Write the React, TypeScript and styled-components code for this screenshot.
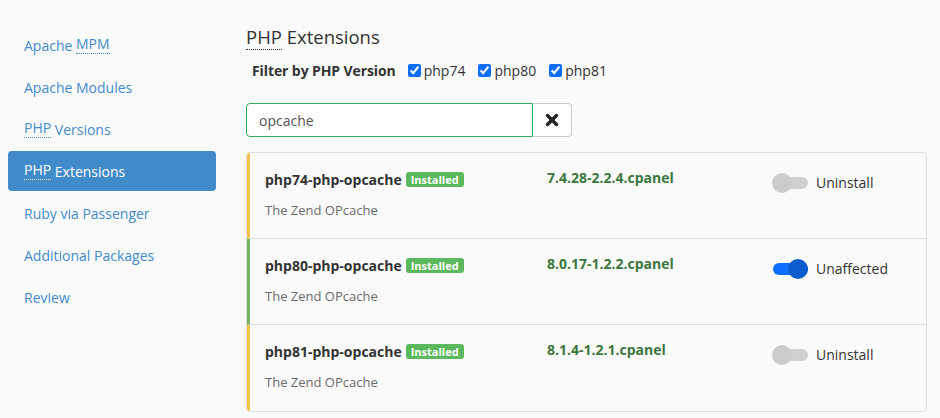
import React from "react";
import styled, { createGlobalStyle } from "styled-components";

const Global = createGlobalStyle`
  html, body { margin: 0; padding: 0; background: #fafafa; }
  body { font-family: "Open Sans", "Liberation Sans", sans-serif; color: #333; font-size: 14px; }
  * { box-sizing: border-box; }
`;

const Page = styled.div`
  display: flex;
  width: 940px;
  height: 418px;
  overflow: hidden;
  background: #fafafa;
`;

const Sidebar = styled.nav`
  width: 216px;
  flex: none;
  padding: 25px 0 0 8px;
  display: flex;
  flex-direction: column;
  gap: 2px;
`;

const NavItem = styled.div<{ $active?: boolean }>`
  height: 40px;
  display: flex;
  align-items: center;
  padding-left: 16px;
  border-radius: 4px;
  font-size: 14px;
  color: ${(p) => (p.$active ? "#fff" : "#428bca")};
  background: ${(p) => (p.$active ? "#428bca" : "transparent")};
`;

const Abbr = styled.abbr`
  text-decoration: none;
  border-bottom: 1px dotted currentColor;
  line-height: 1.15;
`;

const Main = styled.main`
  margin-left: 30px;
  width: 681px;
  display: flex;
  flex-direction: column;
  padding-top: 25px;
`;

const Title = styled.h1`
  margin: 0;
  font-size: 18.5px;
  font-weight: 400;
  line-height: 24px;
  color: #333;
`;

const FilterRow = styled.div`
  display: flex;
  align-items: center;
  margin-top: 10px;
  padding-left: 6px;
  height: 22px;
`;

const FilterLabel = styled.span`
  font-weight: 700;
  font-size: 14px;
  margin-right: 12px;
  letter-spacing: -0.1px;
`;

const Check = styled.label`
  display: flex;
  align-items: center;
  font-size: 14px;
  color: #333;
  margin-right: 13px;
  input {
    margin: 0 3px 0 0;
    width: 13px;
    height: 13px;
    accent-color: #0d6efd;
  }
`;

const SearchGroup = styled.div`
  display: flex;
  margin-top: 22px;
  height: 34px;
  width: 326px;
`;

const SearchInput = styled.input`
  width: 287px;
  height: 34px;
  border: 1px solid #2eaa5c;
  border-radius: 4px 0 0 4px;
  padding: 0 12px;
  font-family: inherit;
  font-size: 14px;
  color: #555;
  background: #fff;
  outline: none;
`;

const ClearButton = styled.button`
  width: 39px;
  height: 34px;
  border: 1px solid #ccc;
  border-left: none;
  border-radius: 0 4px 4px 0;
  background: #fff;
  display: flex;
  align-items: center;
  justify-content: center;
  padding: 0;
`;

const Panel = styled.div`
  margin-top: 15px;
  border: 1px solid #ddd;
  border-radius: 4px;
  overflow: hidden;
  background: #fafafa;
`;

const Row = styled.div<{ $accent: string }>`
  display: grid;
  grid-template-columns: 282px 225px 1fr;
  border-left: 3px solid ${(p) => p.$accent};
  border-bottom: 1px solid #ddd;
  height: 86px;
  padding: 16px 15px 0 15px;
  &:last-child { border-bottom: none; height: 86px; }
`;

const NameCol = styled.div`
  display: flex;
  flex-direction: column;
`;

const NameLine = styled.div`
  display: flex;
  align-items: center;
  height: 20px;
`;

const Name = styled.span`
  font-weight: 700;
  font-size: 14px;
  color: #333;
`;

const Badge = styled.span`
  margin-left: 4px;
  background: #5cb85c;
  color: #fff;
  font-size: 11px;
  font-weight: 700;
  line-height: 15px;
  height: 15px;
  padding: 0 5px;
  border-radius: 3px;
`;

const Desc = styled.div`
  margin-top: 11px;
  font-size: 13px;
  line-height: 20px;
  color: #6a6a6a;
`;

const Version = styled.div`
  font-weight: 700;
  font-size: 14px;
  color: #3c763d;
  line-height: 20px;
  margin-top: -1px;
`;

const ActionCol = styled.div`
  display: flex;
  align-items: flex-start;
  padding-top: 4px;
`;

const Toggle = styled.span<{ $on?: boolean }>`
  position: relative;
  width: 36px;
  height: 20px;
  flex: none;
  &::before {
    content: "";
    position: absolute;
    left: 1px;
    right: 0;
    top: 4px;
    height: 12px;
    border-radius: 6px;
    background: ${(p) => (p.$on ? "#0d6efd" : "#d0d0d0")};
  }
  &::after {
    content: "";
    position: absolute;
    top: 0;
    ${(p) => (p.$on ? "right: 0;" : "left: 0;")}
    width: 20px;
    height: 20px;
    border-radius: 50%;
    background: ${(p) => (p.$on ? "#0a5ccc" : "#cbcbcb")};
  }
`;

const ActionLabel = styled.span`
  margin-left: 8px;
  font-size: 14px;
  line-height: 20px;
  color: #333;
`;

const rows = [
  { name: "php74-php-opcache", version: "7.4.28-2.2.4.cpanel", on: false, label: "Uninstall", accent: "#f5c343" },
  { name: "php80-php-opcache", version: "8.0.17-1.2.2.cpanel", on: true, label: "Unaffected", accent: "#77b563" },
  { name: "php81-php-opcache", version: "8.1.4-1.2.1.cpanel", on: false, label: "Uninstall", accent: "#f5c343" },
];

export default function App() {
  return (
    <>
      <Global />
      <Page>
        <Sidebar>
          <NavItem>Apache&nbsp;<Abbr>MPM</Abbr></NavItem>
          <NavItem>Apache Modules</NavItem>
          <NavItem><Abbr>PHP</Abbr>&nbsp;Versions</NavItem>
          <NavItem $active><Abbr>PHP</Abbr>&nbsp;Extensions</NavItem>
          <NavItem>Ruby via Passenger</NavItem>
          <NavItem>Additional Packages</NavItem>
          <NavItem>Review</NavItem>
        </Sidebar>
        <Main>
          <Title><Abbr>PHP</Abbr> Extensions</Title>
          <FilterRow>
            <FilterLabel>Filter by PHP Version</FilterLabel>
            {["php74", "php80", "php81"].map((v) => (
              <Check key={v}>
                <input type="checkbox" defaultChecked />
                {v}
              </Check>
            ))}
          </FilterRow>
          <SearchGroup>
            <SearchInput defaultValue="opcache" />
            <ClearButton aria-label="clear">
              <svg width="14" height="14" viewBox="0 0 14 14">
                <path d="M2.5 2.5 L11.5 11.5 M11.5 2.5 L2.5 11.5" stroke="#222" strokeWidth="3.4" strokeLinecap="round" />
              </svg>
            </ClearButton>
          </SearchGroup>
          <Panel>
            {rows.map((r) => (
              <Row key={r.name} $accent={r.accent}>
                <NameCol>
                  <NameLine>
                    <Name>{r.name}</Name>
                    <Badge>Installed</Badge>
                  </NameLine>
                  <Desc>The Zend OPcache</Desc>
                </NameCol>
                <Version>{r.version}</Version>
                <ActionCol>
                  <Toggle $on={r.on} />
                  <ActionLabel>{r.label}</ActionLabel>
                </ActionCol>
              </Row>
            ))}
          </Panel>
        </Main>
      </Page>
    </>
  );
}
